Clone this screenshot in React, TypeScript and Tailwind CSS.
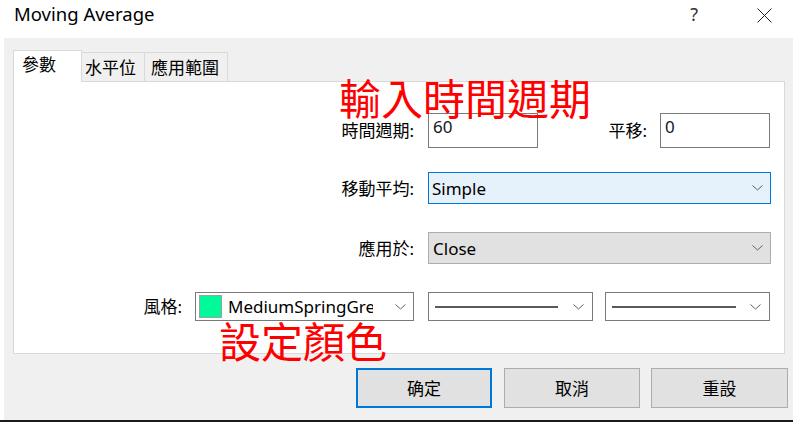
import React from "react";

const font = "font-['Noto_Sans','Noto_Sans_CJK_TC',sans-serif]";

function Chevron() {
  return (
    <svg width="11" height="6" viewBox="0 0 11 6" className="shrink-0">
      <polyline points="0.5,0.5 5.5,5 10.5,0.5" fill="none" stroke="#606060" strokeWidth="1" />
    </svg>
  );
}

function TextBox({ value }: { value: string }) {
  return (
    <div className="w-[110px] h-[35px] border border-[#7a7a7a] bg-white px-[4px] pt-[1px] leading-[23px] text-[#101820]">
      {value}
    </div>
  );
}

function LineSelect({ lineWidth }: { lineWidth: number }) {
  return (
    <div className="w-[165px] h-[29px] border border-[#7a7a7a] bg-white flex items-center pl-[6px] pr-[8px]">
      <div className="h-[2px] bg-[#5a5a5a]" style={{ width: lineWidth }} />
      <div className="flex-1" />
      <Chevron />
    </div>
  );
}

export default function App() {
  return (
    <div className={`relative w-[793px] h-[422px] bg-white flex flex-col text-[17px] text-black ${font}`}>
      {/* title bar */}
      <div className="h-[38px] flex items-start pt-[5px] pl-[14px] pr-[21px] shrink-0">
        <span className="text-[18.5px] leading-[18px]">Moving Average</span>
        <div className="flex-1" />
        <span className="text-[18px] leading-[18px] text-[#333] mr-[59px]">?</span>
        <svg width="15" height="15" viewBox="0 0 15 15" className="mt-[3px]">
          <path d="M0.5 0.5 L14.5 14.5 M14.5 0.5 L0.5 14.5" stroke="#222" strokeWidth="1" />
        </svg>
      </div>

      {/* dialog body */}
      <div className="flex-1 ml-[4px] bg-[#f0f0f0] flex flex-col pt-[12px]">
        {/* tabs */}
        <div className="flex items-end ml-[9px] h-[31px]">
          <div className="relative z-10 h-[32px] -mb-[1px] w-[69px] bg-white border border-b-0 border-[#d9d9d9] pl-[8px] pt-[2px] leading-[23px]">
            參數
          </div>
          <div className="h-[29px] w-[63px] border-t border-r border-[#d9d9d9] pl-[3px] pt-[3px] leading-[23px]">
            水平位
          </div>
          <div className="h-[29px] w-[83px] border-t border-r border-[#d9d9d9] pl-[6px] pt-[3px] leading-[23px]">
            應用範圍
          </div>
        </div>

        {/* panel */}
        <div className="ml-[9px] w-[772px] h-[273px] bg-white border border-[#d9d9d9] flex flex-col leading-[23px]">
          <div className="mt-[31px] h-[35px] flex items-center">
            <div className="w-[400px] text-right">時間週期:</div>
            <div className="ml-[14px]">
              <TextBox value="60" />
            </div>
            <div className="w-[109px] text-right">平移:</div>
            <div className="ml-[13px]">
              <TextBox value="0" />
            </div>
          </div>

          <div className="mt-[24px] h-[32px] flex items-center">
            <div className="w-[400px] text-right">移動平均:</div>
            <div className="ml-[14px] w-[343px] h-[32px] border border-[#0078d7] bg-[#e5f1fb] flex items-center pl-[3px] pr-[7px]">
              <span className="flex-1">Simple</span>
              <Chevron />
            </div>
          </div>

          <div className="mt-[28px] h-[32px] flex items-center">
            <div className="w-[400px] text-right">應用於:</div>
            <div className="ml-[14px] w-[343px] h-[32px] border border-[#adadad] bg-[#e1e1e1] flex items-center pl-[4px] pr-[7px]">
              <span className="flex-1">Close</span>
              <Chevron />
            </div>
          </div>

          <div className="mt-[28px] h-[29px] flex items-center">
            <div className="w-[168px] text-right">風格:</div>
            <div className="ml-[13px] w-[219px] h-[29px] border border-[#7a7a7a] bg-white flex items-center pl-[3px] pr-[7px]">
              <div className="w-[23px] h-[23px] border border-[#a0a0a0] bg-[#00fa9a] shrink-0" />
              <span className="ml-[6px] w-[145px] overflow-hidden whitespace-nowrap">MediumSpringGreen</span>
              <div className="flex-1" />
              <Chevron />
            </div>
            <div className="ml-[14px]">
              <LineSelect lineWidth={123} />
            </div>
            <div className="ml-[12px]">
              <LineSelect lineWidth={124} />
            </div>
          </div>
        </div>

        {/* buttons */}
        <div className="mt-[14px] flex justify-end pr-[5px]">
          <button className="w-[136px] h-[40px] border-2 border-[#0078d7] bg-[#e1e1e1] leading-[23px]">确定</button>
          <button className="ml-[12px] w-[136px] h-[40px] border border-[#adadad] bg-[#e1e1e1] leading-[23px]">取消</button>
          <button className="ml-[11px] w-[137px] h-[40px] border border-[#adadad] bg-[#e1e1e1] leading-[23px]">重設</button>
        </div>
      </div>
      <div className="h-[2px] bg-[#1b1b1b] shrink-0" />

      {/* red annotations */}
      <div className="absolute left-[339px] top-[76px] text-[42px] leading-[42px] text-[#ff0000] font-['Noto_Sans_CJK_TC',sans-serif]">
        輸入時間週期
      </div>
      <div className="absolute left-[219px] top-[319px] text-[42px] leading-[42px] text-[#ff0000] font-['Noto_Sans_CJK_TC',sans-serif]">
        設定顏色
      </div>
    </div>
  );
}
